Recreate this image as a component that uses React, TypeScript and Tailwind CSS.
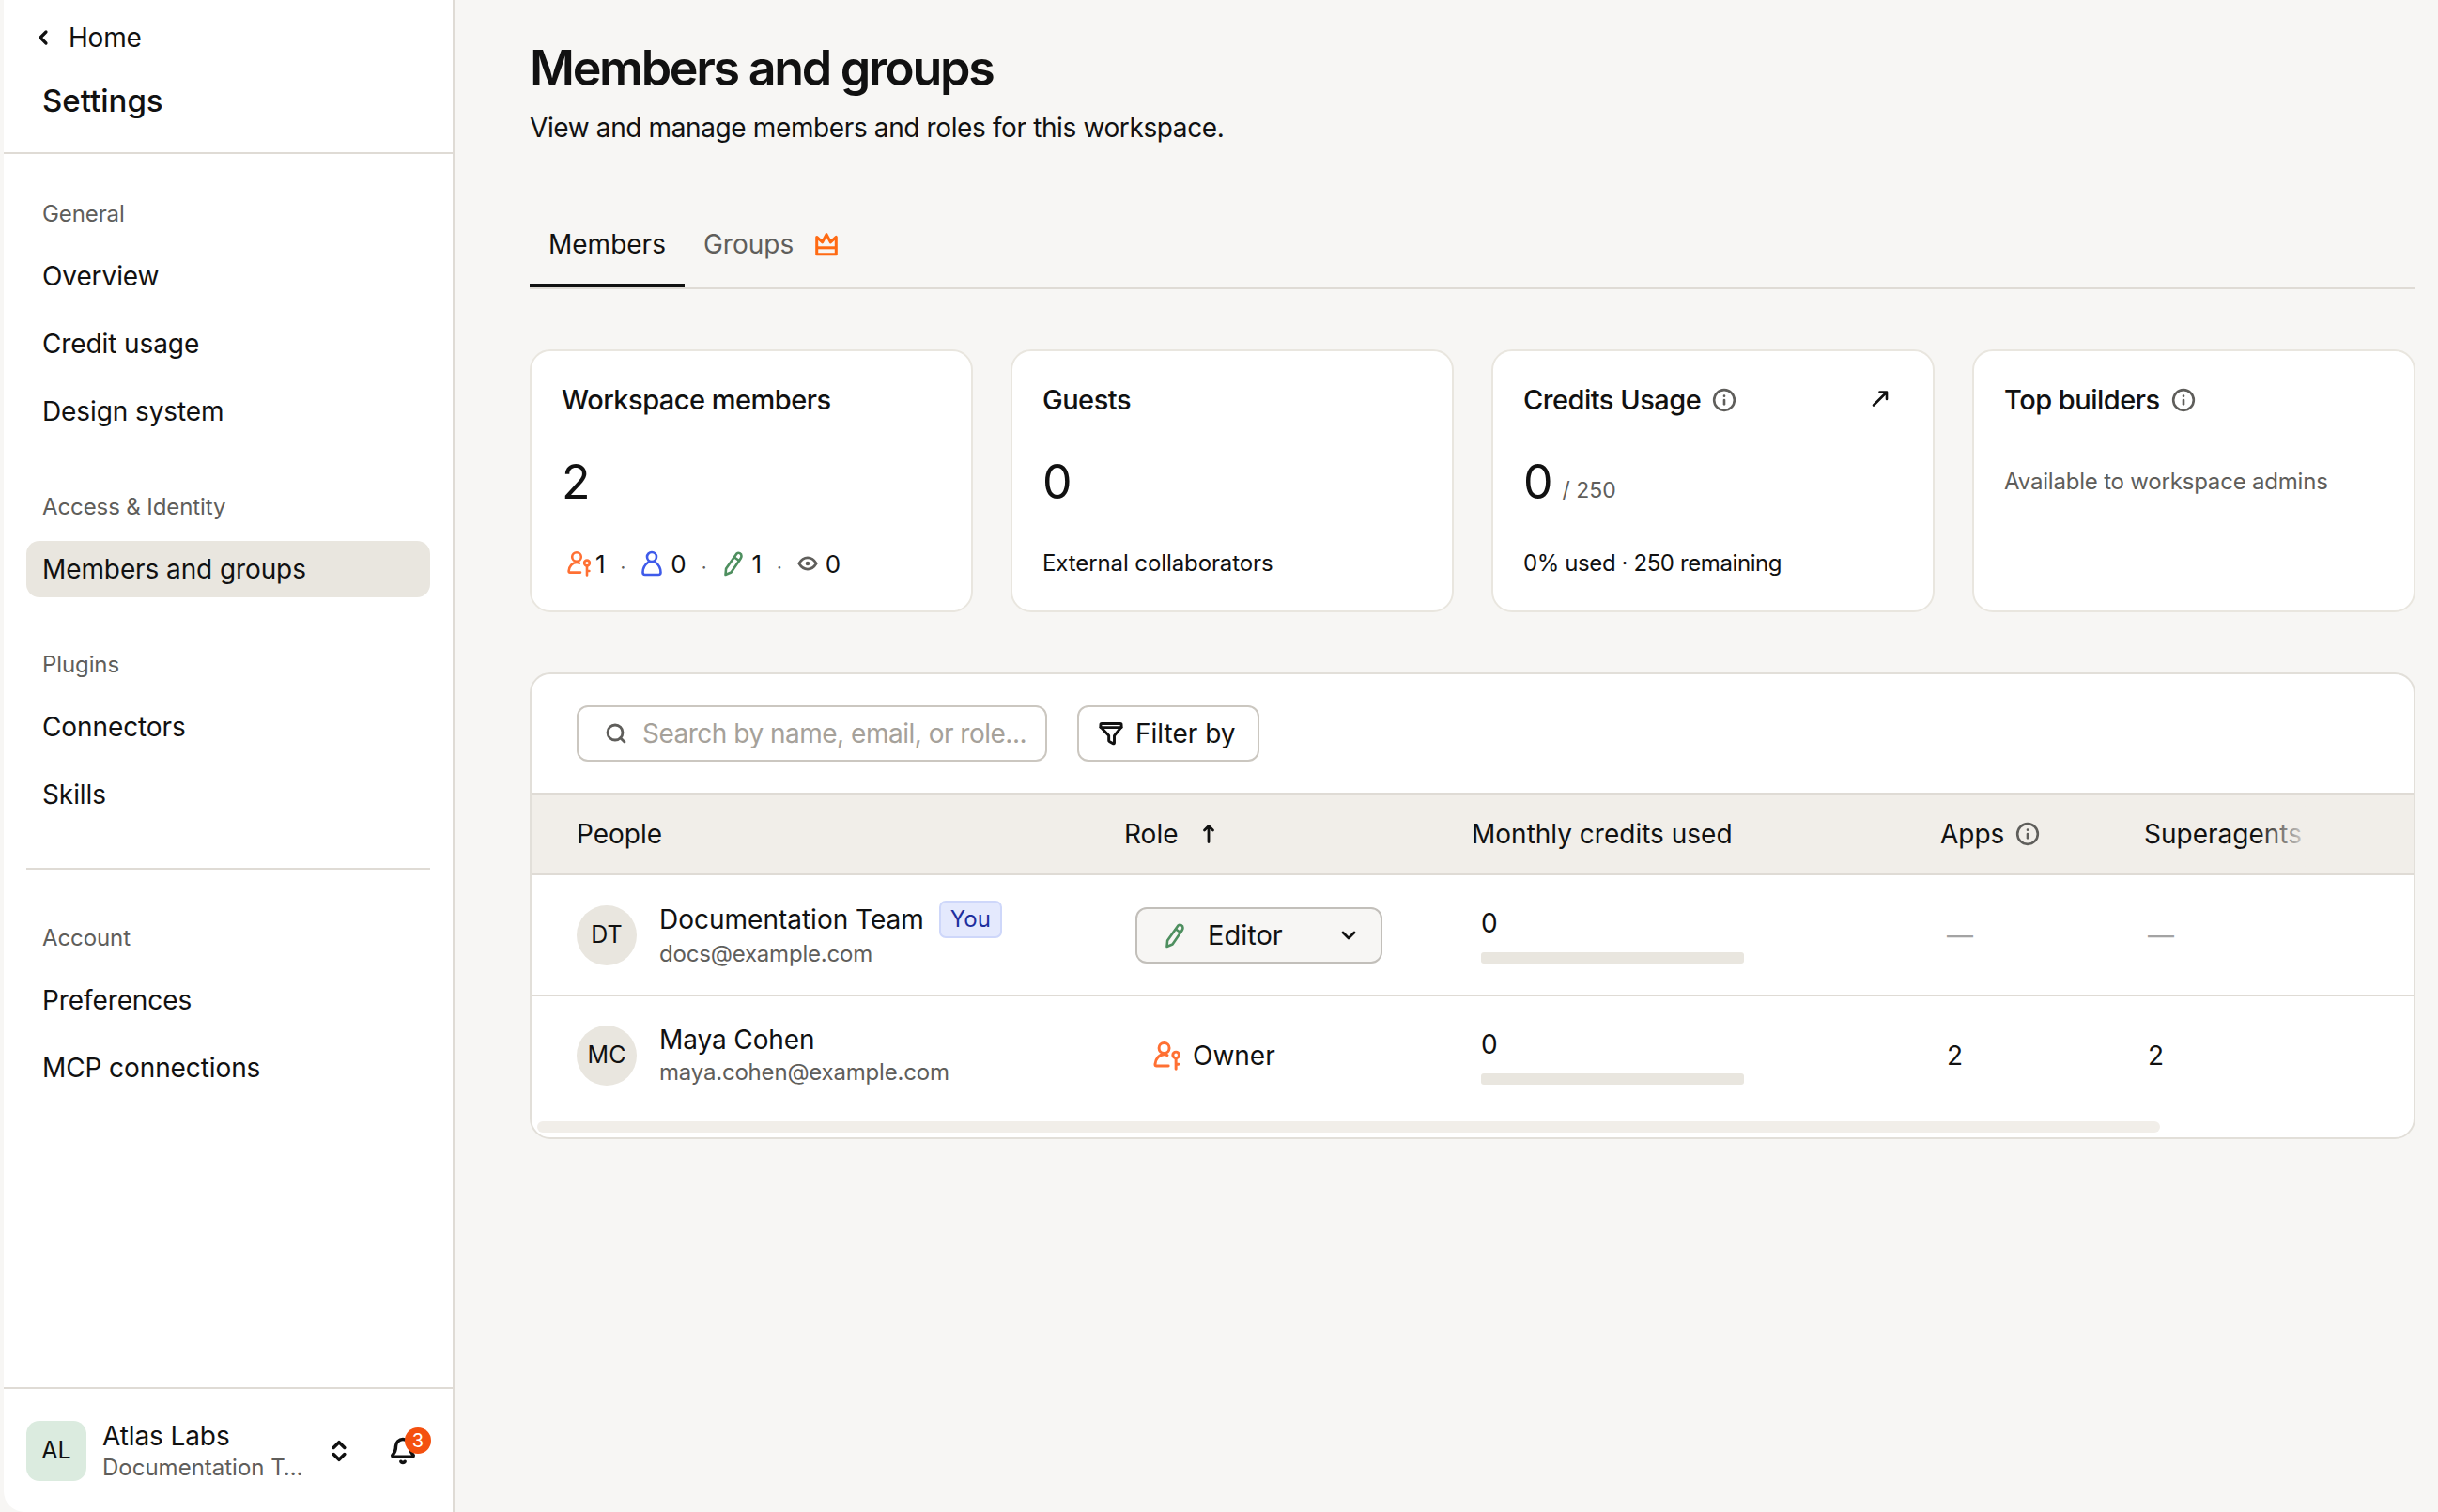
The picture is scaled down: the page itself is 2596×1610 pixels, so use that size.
import React from 'react';
import { ChevronLeft, ChevronDown, ChevronsUpDown, Bell, Info, Search } from 'lucide-react';

const OwnerIcon = ({ className = '' }: { className?: string }) => (
  <svg viewBox="0 0 26 28" fill="none" stroke="#ff7033" strokeWidth="2.6" strokeLinecap="round" strokeLinejoin="round" className={className}>
    <circle cx="10" cy="7" r="4.8" />
    <path d="M13 13.600C12 13.200 11 13 10 13 5.400 13 2 17 1.600 22c0 1 .5 1.600 1.400 1.600H14" />
    <circle cx="21" cy="13.500" r="2.900" />
    <path d="M21 16.500V26.500M21 22h2.400" />
  </svg>
);

const MemberIcon = ({ className = '' }: { className?: string }) => (
  <svg viewBox="0 0 24 28" fill="none" stroke="#3f5bea" strokeWidth="2.6" strokeLinecap="round" strokeLinejoin="round" className={className}>
    <circle cx="12" cy="7" r="5" />
    <path d="M8.500 12.500C5 15 2.500 19.500 2.500 23.500c0 1.500.8 2.500 2.300 2.500h14.400c1.500 0 2.300-1 2.300-2.500 0-4-2.500-8.500-6-11" />
  </svg>
);

const PencilIcon = ({ className = '' }: { className?: string }) => (
  <svg viewBox="0 0 24 28" fill="none" stroke="#4e8f5f" strokeWidth="2.600" strokeLinecap="round" strokeLinejoin="round" className={className}>
    <path d="M15.500 3.500c2-1.600 5-.2 5 2.500 0 1-.3 1.800-.9 2.700L9.500 23.500 3.500 26l.6-6.500z" />
    <path d="M13 7.500l5 3.500" />
  </svg>
);

const EyeIcon = ({ className = '' }: { className?: string }) => (
  <svg viewBox="0 0 24 24" fill="none" stroke="#5f5e5b" strokeWidth="3" className={className}>
    <path d="M2 12c2.600-4.400 6-6.600 10-6.600s7.400 2.200 10 6.600c-2.600 4.400-6 6.600-10 6.600S4.600 16.400 2 12z" />
    <circle cx="12" cy="12" r="2.500" fill="#5f5e5b" stroke="none" />
  </svg>
);

const CrownIcon = ({ className = '' }: { className?: string }) => (
  <svg viewBox="0 0 24 24" fill="none" stroke="#ff6a13" strokeWidth="2.800" strokeLinejoin="round" className={className}>
    <path d="M2.500 5l5.500 5 4-7.500 4 7.500 5.500-5v17h-19z" />
    <path d="M2.500 15.500h19" />
  </svg>
);

const FunnelIcon = ({ className = '' }: { className?: string }) => (
  <svg viewBox="0 0 24 24" fill="none" stroke="#111" strokeWidth="2.500" strokeLinecap="round" strokeLinejoin="round" className={className}>
    <path d="M3.500 3h17c.8 0 1 .6 1 1.200V6l-6.500 8v6.500c0 .6-.6 1-1.100.7l-3.500-2c-.3-.2-.4-.5-.4-.8V14L2.500 6V4.200C2.500 3.600 2.700 3 3.500 3z" />
    <path d="M2.500 6.500h19" />
  </svg>
);

const DiagonalArrow = ({ className = '' }: { className?: string }) => (
  <svg viewBox="0 0 20 20" fill="none" stroke="#111" strokeWidth="2.600" strokeLinecap="round" strokeLinejoin="round" className={className}>
    <path d="M3 17.500L16 4.500M9.500 3.500h7.500v7.500" />
  </svg>
);

const SortArrow = ({ className = '' }: { className?: string }) => (
  <svg viewBox="0 0 24 24" fill="none" stroke="#111" strokeWidth="2.800" strokeLinecap="round" strokeLinejoin="round" className={className}>
    <path d="M12 3.500v17M7.500 8L12 3.500 16.500 8" />
  </svg>
);

const sections = [
  { label: 'General', items: ['Overview', 'Credit usage', 'Design system'] },
  { label: 'Access & Identity', items: ['Members and groups'] },
  { label: 'Plugins', items: ['Connectors', 'Skills'] },
];

const NavSection = ({ label, items }: { label: string; items: string[] }) => (
  <div>
    <div className="h-10 flex items-center px-[41px] text-[24px] tracking-[-0.1px] text-[#5f5e5b]">{label}</div>
    <div className="mt-4 flex flex-col gap-3 px-6">
      {items.map((item) => (
        <div
          key={item}
          className={`h-[60px] flex items-center px-[17px] rounded-[14px] text-[28px] tracking-[-0.1px] text-[#111] ${item === 'Members and groups' ? 'bg-[#e9e6df]' : ''}`}
        >
          {item}
        </div>
      ))}
    </div>
  </div>
);

const Card = ({ children }: { children: React.ReactNode }) => (
  <div className="h-[280px] bg-white border-2 border-[#e9e6df] rounded-[22px] px-8 relative">{children}</div>
);

const CardTitle = ({ title, info }: { title: string; info?: boolean }) => (
  <div className="h-[40px] mt-[32px] flex items-center gap-3 text-[29px] font-medium text-[#111] tracking-[-0.5px]">
    {title}
    {info && <Info className="w-[26px] h-[26px] text-[#5f5e5b]" strokeWidth={2.4} />}
  </div>
);

const Num = ({ children }: { children: React.ReactNode }) => (
  <span className="text-[50px] leading-[60px] text-[#111]">{children}</span>
);

const Dot = () => <span className="text-[#5f5e5b] mx-[16px] text-[20px] relative top-[4px]">·</span>;

const Avatar = ({ text }: { text: string }) => (
  <div className="w-16 h-16 rounded-full bg-[#e9e6df] flex items-center justify-center text-[25px] text-[#111] shrink-0">{text}</div>
);

const Bar = () => <div className="mt-[13px] h-3 w-[280px] rounded-[3px] bg-[#e9e6df]" />;

const ROW = 'grid grid-cols-[583px_370px_499px_217px_1fr] pl-[48px] items-center';

export default function App() {
  return (
    <div className="flex h-[1610px] overflow-hidden bg-[#f7f6f4] font-['Inter',sans-serif] text-[#111]">
      {/* Sidebar */}
      <aside className="ml-1 w-[480px] shrink-0 h-full bg-white border-r-2 border-[#dfdbd5] rounded-bl-[22px] flex flex-col">
        <div className="h-[164px] border-b-2 border-[#dfdbd5] shrink-0">
          <div className="pt-[22px] pl-[30px] flex items-center h-[58px] text-[28px] tracking-[-0.2px]">
            <ChevronLeft className="w-6 h-6 mr-[15px]" strokeWidth={3.200} />
            Home
          </div>
          <div className="mt-[27px] pl-[41px] text-[33px] font-medium leading-[44px]">Settings</div>
        </div>
        <div className="pt-[44px] flex flex-col gap-[52px]">
          {sections.map((s) => (
            <NavSection key={s.label} label={s.label} items={s.items} />
          ))}
        </div>
        <div className="mt-12 mx-6 h-0.5 bg-[#dfdbd5] shrink-0" />
        <div className="mt-[53px]">
          <NavSection label="Account" items={['Preferences', 'MCP connections']} />
        </div>
        <div className="mt-auto h-[133px] border-t-2 border-[#dfdbd5] px-6 flex items-center shrink-0">
          <div className="w-16 h-16 rounded-[14px] bg-[#dbebdf] flex items-center justify-center text-[25px] shrink-0">AL</div>
          <div className="ml-[17px] w-[218px] shrink-0">
            <div className="text-[28px] leading-[36px] tracking-[-0.1px]">Atlas Labs</div>
            <div className="text-[24px] leading-[32px] text-[#5f5e5b] truncate">Documentation Team</div>
          </div>
          <ChevronsUpDown className="ml-[20px] w-7 h-7 shrink-0" strokeWidth={3} />
          <div className="relative ml-[39px] shrink-0">
            <Bell className="w-[30px] h-[30px]" strokeWidth={2.800} />
            <div className="absolute -top-[10px] left-[17px] w-7 h-7 rounded-full bg-[#f4500f] text-white text-[20px] flex items-center justify-center">3</div>
          </div>
        </div>
      </aside>

      {/* Main */}
      <main className="flex-1 pl-20 pr-[24px] pt-[41px]">
        <h1 className="text-[52px] leading-[64px] font-semibold tracking-[-2.3px]">Members and groups</h1>
        <p className="mt-[9px] text-[28px] leading-[44px] tracking-[-0.38px]">View and manage members and roles for this workspace.</p>

        <div className="mt-[56px] flex h-[94px] border-b-2 border-[#dfdbd5]">
          <div className="px-5 h-[92px] flex items-center text-[28px] border-b-4 border-[#111] pt-[4px]">Members</div>
          <div className="px-5 h-[92px] flex items-center text-[28px] text-[#5f5e5b]">
            Groups
            <CrownIcon className="ml-[22px] w-[26px] h-[26px]" />
          </div>
        </div>

        <div className="mt-[64px] grid grid-cols-4 gap-10">
          <Card>
            <CardTitle title="Workspace members" />
            <div className="mt-[37px] h-[60px]"><Num>2</Num></div>
            <div className="mt-[37px] ml-[6px] flex items-center h-10 text-[26px]">
              <OwnerIcon className="w-[26px] h-7 mr-[4px]" />1<Dot />
              <MemberIcon className="w-6 h-7 mr-[8px]" />0<Dot />
              <PencilIcon className="w-6 h-7 mr-[8px]" />1<Dot />
              <EyeIcon className="w-[22px] h-[22px] mr-[8px]" />0
            </div>
          </Card>
          <Card>
            <CardTitle title="Guests" />
            <div className="mt-[37px] h-[60px]"><Num>0</Num></div>
            <div className="mt-[37px] flex items-center h-10 text-[24px] tracking-[-0.1px]">External collaborators</div>
          </Card>
          <Card>
            <CardTitle title="Credits Usage" info />
            <DiagonalArrow className="absolute right-[46px] top-[40px] w-5 h-5" />
            <div className="mt-[37px] h-[60px] flex items-end">
              <Num>0</Num>
              <span className="ml-[10px] mb-[4px] text-[23px] text-[#5f5e5b]">/ 250</span>
            </div>
            <div className="mt-[37px] flex items-center h-10 text-[24px] tracking-[-0.4px]">0% used · 250 remaining</div>
          </Card>
          <Card>
            <CardTitle title="Top builders" info />
            <div className="mt-[37px] h-[60px] flex items-center text-[24px] tracking-[-0.2px] text-[#5f5e5b]">Available to workspace admins</div>
          </Card>
        </div>

        {/* Members table */}
        <div className="mt-[64px] h-[497px] bg-white border-2 border-[#e2dfd9] rounded-[22px] overflow-hidden">
          <div className="h-[126px] pl-[48px] flex items-center gap-[32px]">
            <div className="w-[501px] h-[60px] border-2 border-[#cbc7c0] rounded-[12px] flex items-center pl-[28px]">
              <Search className="w-6 h-6 text-[#5f5e5b] shrink-0" strokeWidth={2.800} />
              <span className="ml-[16px] text-[28px] tracking-[-0.5px] text-[#a5a19a] whitespace-nowrap">Search by name, email, or role...</span>
            </div>
            <div className="w-[194px] h-[60px] border-2 border-[#cbc7c0] rounded-[12px] flex items-center pl-[20px] text-[28px]">
              <FunnelIcon className="w-7 h-7 mr-[12px]" />
              Filter by
            </div>
          </div>
          <div className={`${ROW} relative h-[88px] bg-[#f1eee9] border-y-2 border-[#dfdbd5] text-[28px]`}>
            <div>People</div>
            <div className="flex items-center gap-[20px]">
              Role
              <SortArrow className="w-6 h-6" />
            </div>
            <div>Monthly credits used</div>
            <div className="flex items-center gap-[12px]">
              Apps
              <Info className="w-[26px] h-[26px] text-[#5f5e5b]" strokeWidth={2.400} />
            </div>
            <div>Superagents</div>
            <div className="absolute left-[1836px] top-0 bottom-0 w-[60px] bg-gradient-to-r from-transparent to-[#f1eee9]" />
          </div>
          <div className={`${ROW} h-[129px] border-b-2 border-[#dfdbd5]`}>
            <div className="flex items-center gap-[24px]">
              <Avatar text="DT" />
              <div>
                <div className="flex items-center gap-[16px]">
                  <span className="text-[28px] leading-[36px]">Documentation Team</span>
                  <span className="h-10 px-[10px] flex items-center rounded-[7px] bg-[#e4e9fd] border-2 border-[#ced7fa] text-[#1e2f9e] text-[24px]">You</span>
                </div>
                <div className="text-[24px] leading-[34px] tracking-[-0.2px] text-[#5f5e5b]">docs@example.com</div>
              </div>
            </div>
            <div className="pl-[12px]">
              <div className="w-[263px] h-[60px] bg-[#f7f6f4] border-2 border-[#c2bfba] rounded-[12px] flex items-center pl-[28px] text-[29px]">
                <PencilIcon className="w-6 h-7" />
                <span className="ml-[23px]">Editor</span>
                <ChevronDown className="ml-auto mr-[22px] w-6 h-6" strokeWidth={2.800} />
              </div>
            </div>
            <div className="pl-[10px]">
              <div className="text-[28px] leading-[36px]">0</div>
              <Bar />
            </div>
            <div className="pl-[7px] text-[28px] text-[#a3a3a3]">—</div>
            <div className="pl-[4px] text-[28px] text-[#a3a3a3]">—</div>
          </div>
          <div className={`${ROW} h-[126px]`}>
            <div className="flex items-center gap-[24px]">
              <Avatar text="MC" />
              <div>
                <div className="text-[28px] leading-[36px] tracking-[-0.1px]">Maya Cohen</div>
                <div className="text-[24px] leading-[34px] tracking-[-0.2px] text-[#5f5e5b]">maya.cohen@example.com</div>
              </div>
            </div>
            <div className="pl-[31px] flex items-center gap-[12px] text-[28px]">
              <OwnerIcon className="w-[30px] h-8" />
              Owner
            </div>
            <div className="pl-[10px]">
              <div className="text-[28px] leading-[36px]">0</div>
              <Bar />
            </div>
            <div className="pl-[7px] text-[28px]">2</div>
            <div className="pl-[4px] text-[28px]">2</div>
          </div>
          <div className="ml-1.5 mt-[7px] h-3 w-[1728px] rounded-md bg-[#f1eee9]" />
        </div>
      </main>
    </div>
  );
}
